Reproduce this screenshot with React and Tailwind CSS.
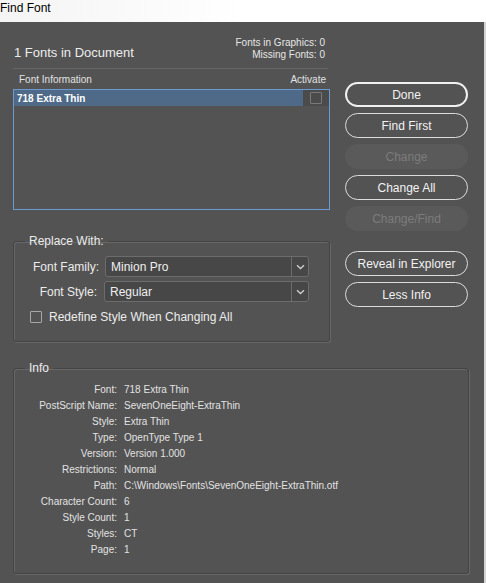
import React from "react";

const infoRows = [
    ["Font:", "718 Extra Thin"],
    ["PostScript Name:", "SevenOneEight-ExtraThin"],
    ["Style:", "Extra Thin"],
    ["Type:", "OpenType Type 1"],
    ["Version:", "Version 1.000"],
    ["Restrictions:", "Normal"],
    ["Path:", "C:\\Windows\\Fonts\\SevenOneEight-ExtraThin.otf"],
    ["Character Count:", "6"],
    ["Style Count:", "1"],
    ["Styles:", "CT"],
    ["Page:", "1"],
];

const Button = ({ children, primary, disabled }) => {
    if (disabled) {
        return (
            <div className="h-[25px] rounded-full bg-[#5a5a5a] text-[#7c7c7c] text-[12px] flex items-center justify-center">
                {children}
            </div>
        );
    }
    return (
        <div
            className={
                "h-[25px] rounded-full text-[#f2f2f2] text-[12px] flex items-center justify-center " +
                (primary ? "border-2 border-[#f0f0f0]" : "border border-[#dcdcdc]")
            }
        >
            {children}
        </div>
    );
};

const Chevron = () => (
    <svg width="9" height="6" viewBox="0 0 9 6" fill="none">
        <path d="M1 1.2 L4.5 4.5 L8 1.2" stroke="#cfcfcf" strokeWidth="1.3" />
    </svg>
);

const Select = ({ value }) => (
    <div className="flex-1 h-[21px] flex border border-[#6c6c6c] rounded-[3px] bg-[#474747]">
        <div className="flex-1 flex items-center pl-[5px] text-[12px] text-[#efefef]">{value}</div>
        <div className="w-[17px] border-l border-[#6c6c6c] flex items-center justify-center">
            <Chevron />
        </div>
    </div>
);

const App = () => {
    return (
        <div
            className="w-[486px] h-[583px] flex flex-col bg-white overflow-hidden"
            style={{ fontFamily: '"Liberation Sans", Arial, sans-serif' }}
        >
            <div className="h-[22px] shrink-0 bg-gradient-to-r from-[#f4f4f4] via-white to-white text-[12px] text-black leading-[16px]">
                Find Font
            </div>

            <div className="flex-1 flex">
                <div className="flex-1 bg-[#535353] pl-[13px] pr-[15px] text-[#e8e8e8]">
                    <div className="flex gap-[15px]">
                        {/* left column */}
                        <div className="w-[317px] flex flex-col">
                            <div className="h-[46px] pt-[15px] flex justify-between items-start">
                                <div className="mt-[8px] pl-px text-[13px] leading-[16px] text-[#ececec]">
                                    1 Fonts in Document
                                </div>
                                <div className="pr-[5px] text-[10px] leading-[12px] text-right text-[#e6e6e6]">
                                    <div>Fonts in Graphics: 0</div>
                                    <div>Missing Fonts: 0</div>
                                </div>
                            </div>
                            <div className="h-px bg-[#666666] mr-[2px]" />
                            <div className="h-[20px] flex items-center justify-between pl-[6px] pr-[4px] text-[10px] text-[#e2e2e2]">
                                <span>Font Information</span>
                                <span>Activate</span>
                            </div>
                            <div className="h-[121px] border border-[#6a9ad0] bg-[#535353]">
                                <div className="h-[16px] flex">
                                    <div className="flex-1 bg-[#4e6a88] flex items-center pl-[3px] text-[10px] font-bold text-white">
                                        718 Extra Thin
                                    </div>
                                    <div className="w-[26px] bg-[#4b4b4b] flex items-center justify-center">
                                        <div className="w-[12px] h-[12px] border border-[#7a7a7a] rounded-[1px]" />
                                    </div>
                                </div>
                            </div>

                            <fieldset className="mt-[23px] h-[109px] border border-[#444444] rounded-[3px] shadow-[1px_1px_0_#676767,inset_1px_1px_0_#676767]">
                                <legend className="ml-[11px] px-[4px] text-[12px] leading-[16px] text-[#ececec]">
                                    Replace With:
                                </legend>
                                <div className="pt-[7px] pr-[20px] flex flex-col gap-[4px]">
                                    <div className="flex items-center">
                                        <div className="w-[85px] text-right text-[12px] text-[#ececec]">Font Family:</div>
                                        <div className="w-[6px]" />
                                        <Select value="Minion Pro" />
                                    </div>
                                    <div className="flex items-center">
                                        <div className="w-[83px] text-right text-[12px] text-[#ececec]">Font Style:</div>
                                        <div className="w-[7px]" />
                                        <Select value="Regular" />
                                    </div>
                                    <div className="flex items-center mt-[2px] pl-[16px] gap-[7px]">
                                        <div className="w-[12px] h-[12px] border border-[#a8a8a8] rounded-[1px]" />
                                        <span className="text-[12px] text-[#ececec]">Redefine Style When Changing All</span>
                                    </div>
                                </div>
                            </fieldset>
                        </div>

                        {/* right column */}
                        <div className="w-[123px] mt-[60px] flex flex-col gap-[6px]">
                            <Button primary>Done</Button>
                            <Button>Find First</Button>
                            <Button disabled>Change</Button>
                            <Button>Change All</Button>
                            <Button disabled>Change/Find</Button>
                            <div className="h-[8px]" />
                            <Button>Reveal in Explorer</Button>
                            <Button>Less Info</Button>
                        </div>
                    </div>

                    <fieldset className="mt-[18px] h-[214px] border border-[#444444] rounded-[3px] shadow-[1px_1px_0_#676767,inset_1px_1px_0_#676767]">
                        <legend className="ml-[11px] px-[4px] text-[12px] leading-[16px] text-[#ececec]">
                            Info
                        </legend>
                        <div className="pt-[5px] flex flex-col">
                            {infoRows.map(([label, value]) => (
                                <div key={label} className="h-[16px] flex items-center text-[10px] text-[#e2e2e2]">
                                    <div className="w-[103px] text-right">{label}</div>
                                    <div className="w-[7px]" />
                                    <div>{value}</div>
                                </div>
                            ))}
                        </div>
                    </fieldset>
                </div>
                <div className="w-[2px] bg-[#d4d4d4]" />
            </div>
        </div>
    );
};

export default App;
